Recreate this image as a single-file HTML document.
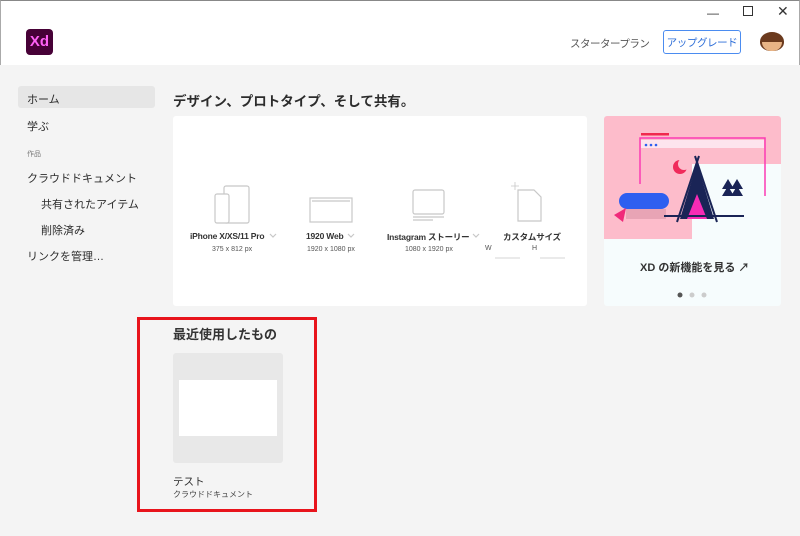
<!DOCTYPE html>
<html><head><meta charset="utf-8"><style>
*{margin:0;padding:0;box-sizing:border-box}
body{width:800px;height:536px;overflow:hidden;background:#f4f4f4;font-family:"Liberation Sans","Noto Sans CJK JP",sans-serif;color:#2c2c2c;position:relative}
.a{position:absolute;white-space:nowrap}
.hdr{position:absolute;left:0;top:0;width:800px;height:65px;background:#fff;border-top:1px solid #888;border-left:1px solid #aaa;border-right:1px solid #aaa}
.side{font-size:11px}
.lbl{font-size:8.5px;font-weight:bold;color:#333;letter-spacing:-0.2px}
.sub{font-size:7px;color:#555}
</style></head><body>
<div class="hdr"></div>
<div class="a" style="left:26px;top:29px;width:27px;height:26px;background:#470137;border-radius:4px;color:#ff61f6;font-weight:bold;font-size:15px;line-height:26px;text-align:center">Xd</div>
<div class="a" style="left:707px;top:6px;font-size:12px;color:#333">—</div>
<div class="a" style="left:743px;top:6px;width:10px;height:10px;border:1.3px solid #333"></div>
<div class="a" style="left:777px;top:3px;font-size:14px;color:#333">✕</div>
<div class="a" style="left:570px;top:36px;font-size:10.5px;color:#555;letter-spacing:-0.5px">スタータープラン</div>
<div class="a" style="left:663px;top:30px;width:78px;height:24px;border:1.5px solid #4b8cf0;border-radius:3px;color:#2f6fd8;font-size:10.5px;display:flex;align-items:center;justify-content:center;letter-spacing:-0.4px">アップグレード</div>
<div class="a" style="left:760px;top:32px;width:24px;height:19px;border-radius:50% 50% 45% 45%;background:#6b3a1e"></div>
<div class="a" style="left:762px;top:42px;width:20px;height:9px;border-radius:0 0 10px 10px;background:#e8b486"></div>

<div class="a" style="left:18px;top:86px;width:137px;height:22px;background:#e6e6e6;border-radius:3px"></div>
<div class="a side" style="left:27px;top:91px">ホーム</div>
<div class="a side" style="left:27px;top:118px">学ぶ</div>
<div class="a" style="left:27px;top:149px;font-size:7px;color:#777">作品</div>
<div class="a side" style="left:27px;top:170px">クラウドドキュメント</div>
<div class="a side" style="left:41px;top:196px">共有されたアイテム</div>
<div class="a side" style="left:41px;top:222px">削除済み</div>
<div class="a side" style="left:27px;top:248px">リンクを管理…</div>

<div class="a" style="left:173px;top:90px;font-size:13.5px;font-weight:bold;color:#2c2c2c">デザイン、プロトタイプ、そして共有。</div>
<div class="a" style="left:173px;top:116px;width:414px;height:190px;background:#fff;border-radius:3px"></div>
<svg class="a" style="left:173px;top:116px" width="414" height="190">
<g fill="none" stroke="#c8c8c8" stroke-width="1.2">
<rect x="51" y="70" width="25" height="37" rx="2"/><rect x="42" y="78" width="14" height="29" rx="2" fill="#fff"/>
<rect x="137" y="82" width="42" height="24"/><line x1="139" y1="85" x2="177" y2="85"/>
<rect x="240" y="74" width="31" height="24" rx="2"/><line x1="240" y1="101" x2="271" y2="101"/><line x1="240" y1="104" x2="260" y2="104"/>
<path d="M345 74h16l7 7v24h-23z"/><path d="M338 70h8M342 66v8" stroke-width="0.8"/>
<line x1="322" y1="142" x2="347" y2="142" stroke-width="0.8"/><line x1="367" y1="142" x2="392" y2="142" stroke-width="0.8"/>
<path d="M97 118l3 3 3-3M175 118l3 3 3-3M300 118l3 3 3-3"/>
</g></svg>
<div class="a lbl" style="left:190px;top:231px">iPhone X/XS/11 Pro</div>
<div class="a sub" style="left:212px;top:246px">375 x 812 px</div>
<div class="a lbl" style="left:306px;top:231px">1920 Web</div>
<div class="a sub" style="left:307px;top:246px">1920 x 1080 px</div>
<div class="a lbl" style="left:387px;top:231px">Instagram ストーリー</div>
<div class="a sub" style="left:405px;top:246px">1080 x 1920 px</div>
<div class="a lbl" style="left:503px;top:231px">カスタムサイズ</div>
<div class="a sub" style="left:485px;top:245px">W</div>
<div class="a sub" style="left:532px;top:245px">H</div>

<div class="a" style="left:604px;top:116px;width:177px;height:190px;background:#f6fcfd;border-radius:3px;overflow:hidden">
<svg width="177" height="190">
<rect width="177" height="123" fill="#fdbccb"/><rect x="88" y="48" width="89" height="75" fill="#f6fcfd"/>
<rect x="37" y="17" width="28" height="2.5" fill="#f0294e"/>
<path d="M36 68V22h125v58" fill="none" stroke="#fb3bb3" stroke-width="1.5"/>
<rect x="37" y="24" width="123" height="8" fill="#fde4ee"/>
<circle cx="42" cy="29" r="1.3" fill="#2e5ff0"/><circle cx="47" cy="29" r="1.3" fill="#2e5ff0"/><circle cx="52" cy="29" r="1.3" fill="#2e5ff0"/>
<circle cx="76" cy="51" r="7" fill="#f02a5b"/><circle cx="80" cy="48" r="6" fill="#fdbccb"/>
<path d="M95 40l-22 66M91 40l22 66" stroke="#1a2456" stroke-width="2"/>
<path d="M93 47l-17 56h34z" fill="#1a2456"/><path d="M93 78l-10 25h20z" fill="#f72bb5"/>
<rect x="15" y="77" width="50" height="16" rx="8" fill="#2e5ff0"/>
<rect x="22" y="93" width="40" height="10" fill="#e8a4b5"/>
<path d="M10 99l12-7-3 14z" fill="#f0297a"/>
<line x1="60" y1="100" x2="140" y2="100" stroke="#1a2456" stroke-width="2"/>
<path d="M124 63l-6 10h12zM124 70l-6 10h12zM133 63l-6 10h12zM133 70l-6 10h12z" fill="#1a2456"/>
<circle cx="76" cy="179" r="2.5" fill="#555"/><circle cx="88" cy="179" r="2.5" fill="#ccc"/><circle cx="100" cy="179" r="2.5" fill="#ccc"/>
</svg></div>
<div class="a" style="left:640px;top:259px;font-size:11px;font-weight:bold;color:#333">XD の新機能を見る ↗</div>

<div class="a" style="left:137px;top:317px;width:180px;height:195px;border:3px solid #e8141c"></div>
<div class="a" style="left:173px;top:324px;font-size:13px;font-weight:bold;color:#333">最近使用したもの</div>
<div class="a" style="left:173px;top:353px;width:110px;height:110px;background:#e8e8e8;border-radius:3px"></div>
<div class="a" style="left:179px;top:380px;width:98px;height:56px;background:#fff"></div>
<div class="a" style="left:173px;top:474px;font-size:10.5px">テスト</div>
<div class="a" style="left:173px;top:489px;font-size:8px;color:#444">クラウドドキュメント</div>
</body></html>
